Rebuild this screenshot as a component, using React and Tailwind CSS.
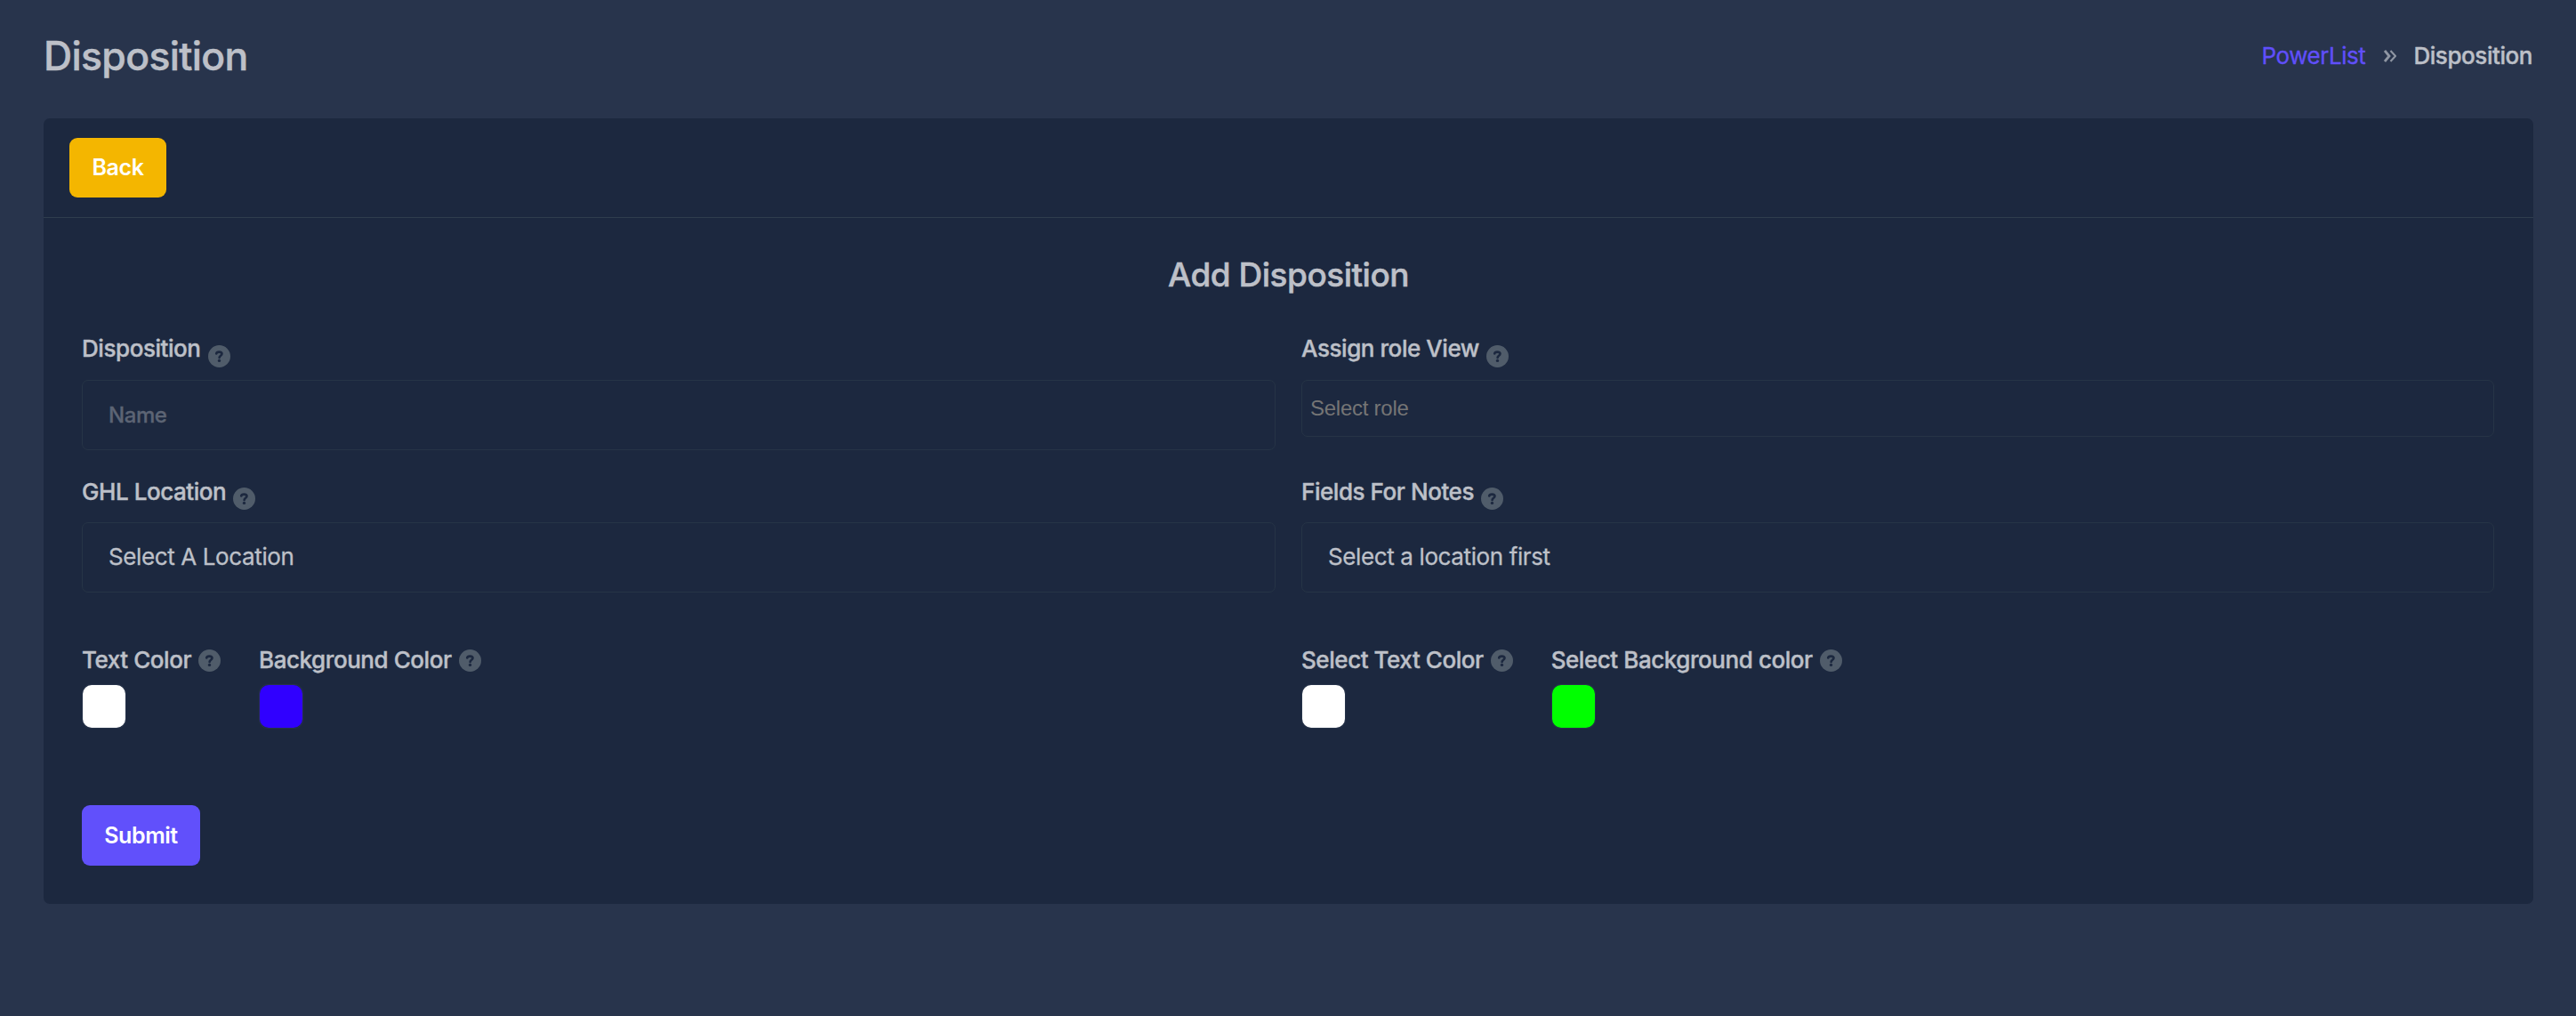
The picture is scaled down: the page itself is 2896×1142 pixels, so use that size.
import React from "react";

function HelpIcon({ className = "" }) {
    return (
        <svg viewBox="0 0 25 25" className={`h-[25px] w-[25px] shrink-0 ${className}`}>
            <circle cx="12.5" cy="12.5" r="12.5" className="fill-[#505c6a]" />
            <path d="M9.2 9.5C9.4 8.2 10.4 7.6 12.3 7.6c2 0 3.2.8 3.2 2.2 0 2-2.9 1.9-2.9 4.2" className="fill-none stroke-[#1c283f]" strokeWidth="2.6" strokeLinecap="round" />
            <circle cx="12.5" cy="17.4" r="1.7" className="fill-[#1c283f]" />
        </svg>
    );
}

function Field({ label, labelClass = "", children }) {
    return (
        <div className="h-[160px]">
            <div className="flex h-[54px] items-start gap-[8px]">
                <label className={`leading-[38px] font-medium [-webkit-text-stroke:0.4px] ${labelClass}`}>{label}</label>
                <HelpIcon className="mt-[15px]" />
            </div>
            {children}
        </div>
    );
}

function ColorField({ label, swatch }) {
    return (
        <div>
            <div className="flex h-[46px] items-start gap-[8px]">
                <label className="leading-[38px] font-medium [-webkit-text-stroke:0.4px]">{label}</label>
                <HelpIcon className="mt-[7px]" />
            </div>
            <div className="h-[50px] w-[50px] rounded-[10px] border border-[#26334a]">
                <div className={`h-full w-full rounded-[10px] ${swatch}`} />
            </div>
        </div>
    );
}

export default function App() {
    return (
        <div className="min-h-screen bg-[#28344c] px-[49px] font-['Inter',sans-serif] text-[26px] tracking-[-0.44px] text-[#bdc0c8]">
            <header className="flex h-[133px] items-start justify-between pt-[33px]">
                <h1 className="text-[44.5px] leading-[60px] font-medium tracking-[-0.65px] [-webkit-text-stroke:0.5px]">Disposition</h1>
                <nav className="flex items-center pt-[11px] leading-[38px]">
                    <a className="text-[#604ffb] [-webkit-text-stroke:0.3px]">PowerList</a>
                    <svg viewBox="0 0 14 14" className="mr-[19px] ml-[21px] h-[14px] w-[14px] fill-none stroke-[#8f96a3]">
                        <path strokeWidth="2.8" d="M1 1l5 6-5 6" />
                        <path strokeWidth="2.1" d="M7.5 1l5.5 6-5.5 6" />
                    </svg>
                    <span className="font-medium [-webkit-text-stroke:0.4px]">Disposition</span>
                </nav>
            </header>

            <main className="h-[883px] w-[2799px] rounded-[7px] bg-[#1c283f]">
                <div className="h-[112px] border-b border-[#2f3d4d] px-[29px] pt-[22px]">
                    <button className="h-[67px] w-[109px] rounded-[9px] bg-[#f4b600] text-[25px] font-semibold text-white">Back</button>
                </div>

                <div className="px-[43px]">
                    <h2 className="h-[128px] pt-[38px] text-center text-[37px] leading-[52px] font-medium tracking-[-0.5px] [-webkit-text-stroke:0.5px]">Add Disposition</h2>

                    <div className="grid grid-cols-[1342px_1341px] gap-x-[29px]">
                        <Field label="Disposition">
                            <div className="flex h-[79px] items-center rounded-[7px] border border-[#263446] pl-[29px] text-[24px] font-medium text-[#5c6474] [-webkit-text-stroke:0.3px]">Name</div>
                        </Field>
                        <Field label="Assign role View">
                            <div className="flex h-[64px] items-center rounded-[7px] border border-[#263446] pl-[9px] text-[#757575]">
                                <span className="font-['Liberation_Sans',sans-serif] text-[24px] tracking-[-0.25px]">Select role</span>
                            </div>
                        </Field>
                        <Field label="GHL Location" labelClass="pt-px">
                            <div className="flex h-[79px] items-center rounded-[7px] border border-[#263446] pb-[2px] pl-[29px] tracking-[-0.38px] [-webkit-text-stroke:0.3px]">Select A Location</div>
                        </Field>
                        <Field label="Fields For Notes" labelClass="pt-px">
                            <div className="flex h-[79px] items-center rounded-[7px] border border-[#263446] pb-[2px] pl-[29px] tracking-[-0.38px] [-webkit-text-stroke:0.3px]">Select a location first</div>
                        </Field>

                        <div className="flex gap-[43px] pt-[30px]">
                            <ColorField label="Text Color" swatch="bg-white" />
                            <ColorField label="Background Color" swatch="bg-[#3000ff]" />
                        </div>
                        <div className="flex gap-[43px] pt-[30px]">
                            <ColorField label="Select Text Color" swatch="bg-white" />
                            <ColorField label="Select Background color" swatch="bg-[#00ff00]" />
                        </div>
                    </div>

                    <button className="mt-[86px] h-[68px] w-[133px] rounded-[9px] bg-[#6150fb] pt-px text-[25px] font-semibold text-white">Submit</button>
                </div>
            </main>
        </div>
    );
}
